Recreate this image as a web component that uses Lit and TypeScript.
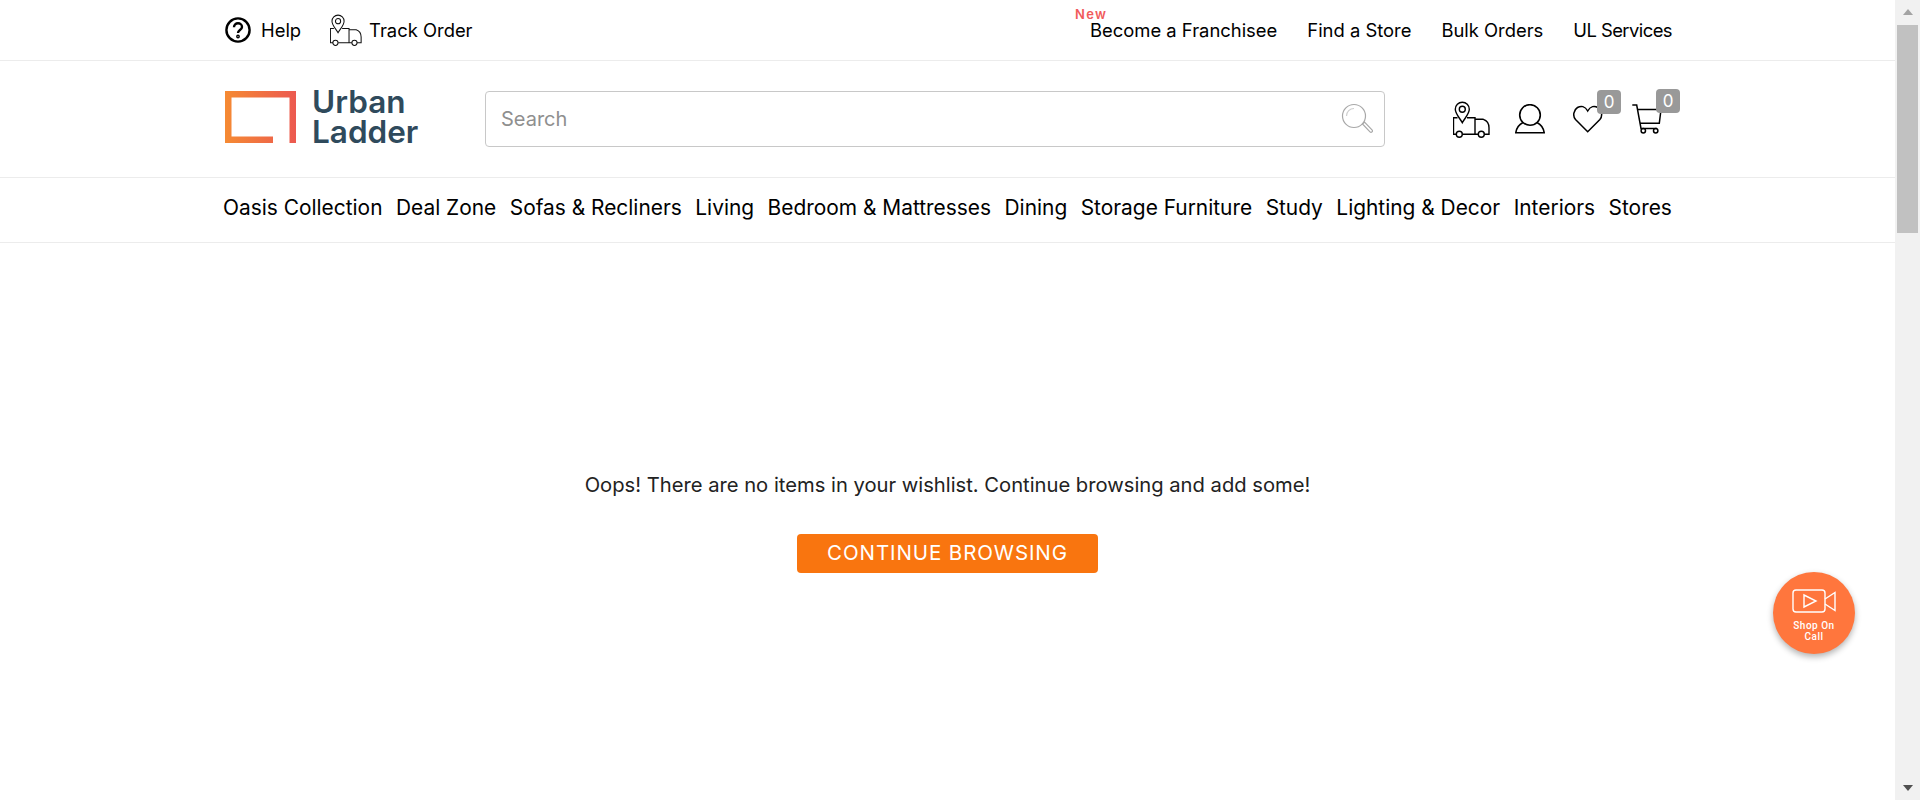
import { LitElement, html, css, svg } from "lit";
import { customElement } from "lit/decorators.js";

const NAV = [
  "Oasis Collection",
  "Deal Zone",
  "Sofas & Recliners",
  "Living",
  "Bedroom & Mattresses",
  "Dining",
  "Storage Furniture",
  "Study",
  "Lighting & Decor",
  "Interiors",
  "Stores",
];

const LINKS = ["Find a Store", "Bulk Orders", "UL Services"];

// camión con pin, dibujado en una caja de 37x37
const truck = svg`
  <path d="M9.3 1.3a7 7 0 0 0-7 7c0 4.6 4.6 9 7 13.4 2.4-4.4 7-8.8 7-13.4a7 7 0 0 0-7-7z" />
  <circle cx="9.3" cy="8.3" r="3" />
  <path d="M4.5 16.7H.5v16.600h3M14 16.700h8v16.600H9.500M22 18.300h8.300c3.500 1.200 5.700 4.400 5.700 8.400v6.600h-4.700M22 33.300h3.300" />
  <circle cx="6.300" cy="33.300" r="3" />
  <circle cx="28.300" cy="33.300" r="3" />
`;

@customElement("app-root")
export class AppRoot extends LitElement {
  static styles = css`
    :host {
      display: grid;
      grid-template-columns: 1fr 25px;
      height: 800px;
      overflow: hidden;
      font-family: "Inter", "Liberation Sans", sans-serif;
      color: #000;
      background: #fff;
    }
    .page {
      position: relative;
      min-width: 0;
    }
    .wrap {
      width: 1449px;
      margin-left: 223px;
      display: flex;
      align-items: center;
    }
    svg {
      display: block;
      fill: none;
      stroke: #000;
    }

    /* barra superior */
    .top {
      height: 60px;
      border-bottom: 1px solid #ececec;
      font-size: 18.4px;
    }
    .top .wrap {
      height: 60px;
      justify-content: space-between;
    }
    .top-left,
    .top-right {
      display: flex;
      align-items: center;
    }
    .help {
      display: flex;
      align-items: center;
      gap: 10px;
      margin-left: 2px;
      margin-right: 29px;
    }
    .help svg {
      stroke-width: 2.4;
    }
    .track {
      display: flex;
      align-items: center;
      gap: 7px;
    }
    .track svg {
      stroke: #111;
      stroke-width: 1.2;
    }
    .top-right {
      gap: 30px;
    }
    .top-right > span:last-child {
      letter-spacing: -0.55px;
    }
    .franchise {
      position: relative;
    }
    .new {
      position: absolute;
      left: -15px;
      top: -13px;
      font-size: 13px;
      font-weight: 600;
      letter-spacing: 1.3px;
      color: #f15b5b;
    }

    /* cabecera */
    .head {
      height: 116px;
      border-bottom: 1px solid #ececec;
    }
    .head .wrap {
      height: 116px;
    }
    .logo {
      display: flex;
      align-items: center;
      gap: 16px;
      width: 260px;
      margin-left: 2px;
      margin-bottom: 4px;
      flex: none;
    }
    .logo svg {
      stroke: none;
    }
    .logo-name {
      font-size: 31.5px;
      line-height: 30px;
      font-weight: 600;
      color: #2f4a5c;
    }
    .search {
      width: 900px;
      height: 56px;
      box-sizing: border-box;
      flex: none;
      border: 1px solid #c8c8c8;
      border-radius: 4px;
      display: flex;
      align-items: center;
      justify-content: space-between;
      padding: 0 11px 0 15px;
      font-size: 20px;
      color: #8f8f8f;
    }
    .search svg {
      stroke: #a8a8a8;
      stroke-width: 1.2;
    }
    .search svg .shine {
      stroke: #cfcfcf;
    }
    .actions {
      flex: 1;
      display: flex;
      align-items: center;
      margin-left: 68px;
    }
    .action {
      position: relative;
    }
    .act-truck {
      margin-right: 25px;
      stroke-width: 1.4;
    }
    .act-user {
      margin-right: 28px;
      stroke-width: 1.6;
    }
    .act-heart {
      margin-right: 29px;
      stroke-width: 1.5;
    }
    .act-cart {
      stroke-width: 1.5;
    }
    .action svg {
      stroke-width: inherit;
    }
    .badge {
      position: absolute;
      top: -15px;
      right: -18px;
      width: 24px;
      height: 24px;
      border-radius: 4px;
      background: #999;
      color: #fff;
      font-size: 17px;
      line-height: 24px;
      text-align: center;
    }

    /* navegación */
    .nav {
      height: 64px;
      border-bottom: 1px solid #ececec;
      font-size: 20.9px;
    }
    .nav .wrap {
      height: 58px;
      justify-content: space-between;
    }

    /* mensaje */
    .empty {
      display: flex;
      flex-direction: column;
      align-items: center;
      padding-top: 228px;
    }
    .msg {
      font-size: 20.2px;
      line-height: 28px;
      color: #222;
    }
    .btn {
      margin-top: 35px;
      width: 301px;
      height: 39px;
      border-radius: 4px;
      background: #f9750f;
      color: #fff;
      font-size: 20.5px;
      letter-spacing: 0.9px;
      line-height: 37px;
      text-align: center;
    }

    /* botón flotante */
    .call {
      position: absolute;
      left: 1773px;
      top: 572px;
      width: 82px;
      height: 82px;
      border-radius: 50%;
      background: #ff763d;
      box-shadow: 0 3px 6px rgba(0, 0, 0, 0.3);
      color: #fff;
      font-family: "Roboto", sans-serif;
      font-size: 10px;
      font-weight: 500;
      letter-spacing: 0.5px;
      line-height: 11px;
      text-align: center;
      display: flex;
      flex-direction: column;
      align-items: center;
      padding-top: 17px;
      box-sizing: border-box;
    }
    .call svg {
      stroke: #fff;
      stroke-width: 1.4;
      margin-bottom: 7px;
    }

    /* scrollbar dibujada */
    .scroll {
      background: #f1f1f1;
      display: flex;
      flex-direction: column;
      align-items: center;
      justify-content: space-between;
      padding-top: 9px;
      padding-bottom: 9px;
      box-sizing: border-box;
      position: relative;
    }
    .thumb {
      position: absolute;
      left: 2px;
      right: 2px;
      top: 25px;
      height: 208px;
      background: #c1c1c1;
    }
    .up {
      width: 0;
      height: 0;
      border-left: 5.5px solid transparent;
      border-right: 5.5px solid transparent;
      border-bottom: 6px solid #a3a3a3;
    }
    .down {
      width: 0;
      height: 0;
      border-left: 5.5px solid transparent;
      border-right: 5.5px solid transparent;
      border-top: 6px solid #505050;
    }
  `;

  render() {
    return html`
      <div class="page">
        <div class="top">
          <div class="wrap">
            <div class="top-left">
              <div class="help">
                <svg width="26" height="26" viewBox="0 0 26 26">
                  <circle cx="13" cy="13" r="11.600" />
                  <path d="M9 10.200c0-2.400 1.800-3.900 4-3.900s4 1.500 4 3.600c0 3-4 3.200-4 6" />
                  <circle cx="13" cy="19.500" r=".7" />
                </svg>
                <span>Help</span>
              </div>
              <div class="track">
                <svg width="32" height="32" viewBox="0 0 37 37">${truck}</svg>
                <span>Track Order</span>
              </div>
            </div>
            <div class="top-right">
              <span class="franchise"><span class="new">New</span>Become a Franchisee</span>
              ${LINKS.map((l) => html`<span>${l}</span>`)}
            </div>
          </div>
        </div>

        <div class="head">
          <div class="wrap">
            <div class="logo">
              <svg width="71" height="52" viewBox="0 0 71 52">
                <defs>
                  <linearGradient id="lg" x1="0" y1="0" x2="1" y2="0">
                    <stop offset="0" stop-color="#f58a33" />
                    <stop offset="1" stop-color="#ec5950" />
                  </linearGradient>
                </defs>
                <path fill="url(#lg)" d="M0 0h71v52h-6.500V6.500H6.500v39H48V52H0z" />
              </svg>
              <div class="logo-name">Urban<br />Ladder</div>
            </div>
            <div class="search">
              <span>Search</span>
              <svg width="32" height="32" viewBox="0 0 32 32">
                <circle cx="13" cy="13" r="11.500" />
                <path class="shine" d="M5.500 13a7.500 7.500 0 0 1 7.500-7.500" />
                <path d="M21.500 21l2-2 7.500 7.800c.6.600.6 1.400 0 2-.6.600-1.400.6-2 0z" />
              </svg>
            </div>
            <div class="actions">
              <div class="action act-truck">
                <svg width="37" height="37" viewBox="0 0 37 37">${truck}</svg>
              </div>
              <div class="action act-user">
                <svg width="30" height="30" viewBox="0 0 30 30">
                  <circle cx="15" cy="11" r="10.300" />
                  <path d="M8 18.500C4 20.500 1.500 24 .8 28.700h28.400C28.500 24 26 20.500 22 18.500" />
                </svg>
              </div>
              <div class="action act-heart">
                <svg width="30" height="28" viewBox="0 0 30 28">
                  <path d="M14.700 26.700L2.500 14.500C-.5 11 .5 5 4.500 2.500c3.500-2 7.500-1.500 10.200 3.500 2.700-5 6.700-5.500 10.200-3.500 4 2.500 5 8.500 2 12z" />
                </svg>
                <span class="badge">0</span>
              </div>
              <div class="action act-cart">
                <svg width="30" height="30" viewBox="0 0 30 30">
                  <path d="M.3 1h4.400L9 24.500h16" />
                  <path d="M6 5.500h23l-1.700 13.800H8" />
                  <circle cx="11.300" cy="26.700" r="2.200" />
                  <circle cx="23.700" cy="26.700" r="2.200" />
                </svg>
                <span class="badge">0</span>
              </div>
            </div>
          </div>
        </div>

        <div class="nav">
          <div class="wrap">${NAV.map((n) => html`<span>${n}</span>`)}</div>
        </div>

        <div class="empty">
          <div class="msg">Oops! There are no items in your wishlist. Continue browsing and add some!</div>
          <div class="btn">CONTINUE BROWSING</div>
        </div>

        <div class="call">
          <svg width="44" height="24" viewBox="0 0 44 24">
            <rect x="1" y="1" width="32" height="22" rx="3" />
            <path d="M12 6v12l12-6z" />
            <path d="M33 10l10-6.500v18L33 15" />
          </svg>
          <span>Shop On<br />Call</span>
        </div>
      </div>

      <div class="scroll">
        <div class="up"></div>
        <div class="thumb"></div>
        <div class="down"></div>
      </div>
    `;
  }
}
